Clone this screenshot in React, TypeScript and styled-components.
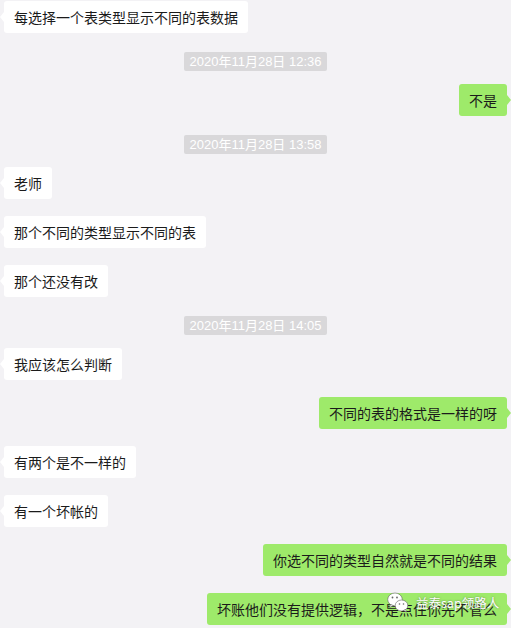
import React from "react";
import styled, { createGlobalStyle } from "styled-components";

const Global = createGlobalStyle`
  html, body { margin: 0; padding: 0; background: #f3f2f5; }
  body { overflow: hidden; }
  * { box-sizing: border-box; }
`;

const Page = styled.div`
  position: relative;
  min-height: 628px;
  background: #f3f2f5;
  padding-top: 1px;
  display: flex;
  flex-direction: column;
  font-family: "Noto Sans CJK SC", "Liberation Sans", sans-serif;
`;

const Row = styled.div<{ $me?: boolean }>`
  display: flex;
  justify-content: ${(p) => (p.$me ? "flex-end" : "flex-start")};
  padding: 0 4px;
  margin-bottom: 17px;
`;

const Bubble = styled.div<{ $me?: boolean }>`
  position: relative;
  height: 32px;
  display: flex;
  align-items: center;
  padding: 0 10px;
  border-radius: 3px;
  background: ${(p) => (p.$me ? "#9eea6a" : "#ffffff")};
  color: #1b1b1b;
  font-size: 14px;
  line-height: 20px;
  white-space: nowrap;
  &::after {
    content: "";
    position: absolute;
    top: 50%;
    margin-top: -5px;
    border-top: 5px solid transparent;
    border-bottom: 5px solid transparent;
    ${(p) =>
      p.$me
        ? `right: -4px; border-left: 4px solid #9eea6a;`
        : `left: -4px; border-right: 4px solid #ffffff;`}
  }
`;

const TimeRow = styled.div`
  display: flex;
  justify-content: center;
  margin-top: 2px;
  margin-bottom: 13px;
`;

const Time = styled.div`
  height: 19px;
  line-height: 19px;
  padding: 0 5px;
  border-radius: 2px;
  background: #d9d8da;
  color: #ffffff;
  font-size: 13px;
  font-family: "Liberation Sans", "Noto Sans CJK SC", sans-serif;
  white-space: nowrap;
`;

const Watermark = styled.div`
  position: absolute;
  left: 387px;
  top: 592px;
  display: flex;
  align-items: center;
  gap: 7px;
  color: #ffffff;
  font-size: 12.5px;
  white-space: nowrap;
  font-family: "Noto Sans CJK SC", sans-serif;
  text-shadow: 0 0 2px rgba(80, 80, 80, 0.7);
  pointer-events: none;
`;

const WeChatMark = () => (
  <svg width="22" height="21" viewBox="0 0 22 21">
    <g stroke="rgba(90,90,90,0.55)" strokeWidth="1" fill="#ffffff">
      <ellipse cx="8" cy="7.5" rx="7.3" ry="6.5" />
      <path d="M3.5 12.5 L2.5 15.5 L6.5 13.6 Z" />
      <ellipse cx="14.5" cy="13.5" rx="6.3" ry="5.5" />
      <path d="M18.5 17.5 L19.6 20 L16.2 18.6 Z" />
    </g>
    <circle cx="5.5" cy="5.5" r="0.9" fill="#666" />
    <circle cx="10" cy="5.5" r="0.9" fill="#666" />
    <circle cx="12.5" cy="12" r="0.8" fill="#666" />
    <circle cx="16.5" cy="12" r="0.8" fill="#666" />
  </svg>
);

type Item =
  | { kind: "time"; text: string }
  | { kind: "msg"; me?: boolean; text: string };

const items: Item[] = [
  { kind: "msg", text: "每选择一个表类型显示不同的表数据" },
  { kind: "time", text: "2020年11月28日 12:36" },
  { kind: "msg", me: true, text: "不是" },
  { kind: "time", text: "2020年11月28日 13:58" },
  { kind: "msg", text: "老师" },
  { kind: "msg", text: "那个不同的类型显示不同的表" },
  { kind: "msg", text: "那个还没有改" },
  { kind: "time", text: "2020年11月28日 14:05" },
  { kind: "msg", text: "我应该怎么判断" },
  { kind: "msg", me: true, text: "不同的表的格式是一样的呀" },
  { kind: "msg", text: "有两个是不一样的" },
  { kind: "msg", text: "有一个坏帐的" },
  { kind: "msg", me: true, text: "你选不同的类型自然就是不同的结果" },
  { kind: "msg", me: true, text: "坏账他们没有提供逻辑，不是点住你先不管么" },
];

export default function App() {
  return (
    <>
      <Global />
      <Page>
        {items.map((it, i) =>
          it.kind === "time" ? (
            <TimeRow key={i}>
              <Time>{it.text}</Time>
            </TimeRow>
          ) : (
            <Row key={i} $me={it.me}>
              <Bubble $me={it.me}>{it.text}</Bubble>
            </Row>
          )
        )}
        <Watermark>
          <WeChatMark />
          <span>益泰sap领路人</span>
        </Watermark>
      </Page>
    </>
  );
}
